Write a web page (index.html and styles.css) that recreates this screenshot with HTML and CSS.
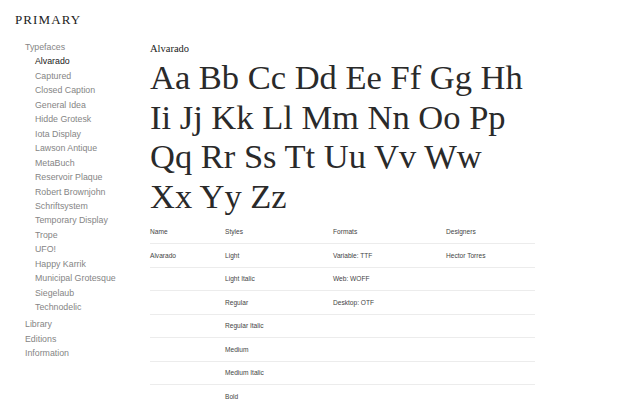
FILE: index.html
```html
<!DOCTYPE html>
<html>
<head>
<meta charset="utf-8">
<link rel="stylesheet" href="styles.css">
</head>
<body>
<div class="page">
  <aside class="side">
    <div class="logo">PRIMARY</div>
    <nav class="nav">
      <div class="nav-item">Typefaces</div>
      <div class="sub">
        <div class="sub-item active">Alvarado</div>
        <div class="sub-item">Captured</div>
        <div class="sub-item">Closed Caption</div>
        <div class="sub-item">General Idea</div>
        <div class="sub-item">Hidde Grotesk</div>
        <div class="sub-item">Iota Display</div>
        <div class="sub-item">Lawson Antique</div>
        <div class="sub-item">MetaBuch</div>
        <div class="sub-item">Reservoir Plaque</div>
        <div class="sub-item">Robert Brownjohn</div>
        <div class="sub-item">Schriftsystem</div>
        <div class="sub-item">Temporary Display</div>
        <div class="sub-item">Trope</div>
        <div class="sub-item">UFO!</div>
        <div class="sub-item">Happy Karrik</div>
        <div class="sub-item">Municipal Grotesque</div>
        <div class="sub-item">Siegelaub</div>
        <div class="sub-item">Technodelic</div>
      </div>
      <div class="nav-item">Library</div>
      <div class="nav-item">Editions</div>
      <div class="nav-item">Information</div>
    </nav>
  </aside>
  <main class="main">
    <h1 class="title">Alvarado</h1>
    <div class="specimen">
      <div>Aa Bb Cc Dd Ee Ff Gg Hh</div>
      <div>Ii Jj Kk Ll Mm Nn Oo Pp</div>
      <div>Qq Rr Ss Tt Uu Vv Ww</div>
      <div>Xx Yy Zz</div>
    </div>
    <div class="table">
      <div class="row head">
        <div class="c1">Name</div><div class="c2">Styles</div><div class="c3">Formats</div><div class="c4">Designers</div>
      </div>
      <div class="row">
        <div class="c1">Alvarado</div><div class="c2">Light</div><div class="c3">Variable: TTF</div><div class="c4">Hector Torres</div>
      </div>
      <div class="row">
        <div class="c1"></div><div class="c2">Light Italic</div><div class="c3">Web: WOFF</div><div class="c4"></div>
      </div>
      <div class="row">
        <div class="c1"></div><div class="c2">Regular</div><div class="c3">Desktop: OTF</div><div class="c4"></div>
      </div>
      <div class="row">
        <div class="c1"></div><div class="c2">Regular Italic</div><div class="c3"></div><div class="c4"></div>
      </div>
      <div class="row">
        <div class="c1"></div><div class="c2">Medium</div><div class="c3"></div><div class="c4"></div>
      </div>
      <div class="row">
        <div class="c1"></div><div class="c2">Medium Italic</div><div class="c3"></div><div class="c4"></div>
      </div>
      <div class="row last">
        <div class="c1"></div><div class="c2">Bold</div><div class="c3"></div><div class="c4"></div>
      </div>
    </div>
  </main>
</div>
</body>
</html>
```
FILE: styles.css
```css
html, body {
  margin: 0;
  padding: 0;
  background: #ffffff;
}
body {
  width: 640px;
  height: 400px;
  overflow: hidden;
}
.page {
  display: flex;
  align-items: flex-start;
}
.side {
  width: 135px;
  padding-left: 15px;
  padding-top: 12px;
  flex: none;
}
.logo {
  font-family: "Liberation Serif", serif;
  font-size: 13px;
  line-height: 16px;
  letter-spacing: 1.1px;
  color: #222;
}
.nav {
  margin-top: 12px;
  padding-left: 10px;
  font-family: "Liberation Sans", Arial, sans-serif;
  font-size: 8.8px;
  line-height: 14.45px;
  color: #858585;
}
.sub {
  padding-left: 10px;
  margin-bottom: 2.5px;
}
.sub-item.active {
  color: #1a1a1a;
}
.main {
  flex: 1;
  padding-top: 42px;
}
.title {
  margin: 0;
  font-family: "Liberation Serif", serif;
  font-weight: normal;
  font-size: 10.5px;
  line-height: 14px;
  color: #222;
}
.specimen {
  margin-top: 2px;
  font-family: "Liberation Serif", serif;
  font-size: 34.5px;
  line-height: 39.5px;
  color: #2a2a2a;
  white-space: nowrap;
}
.table {
  margin-top: 4.5px;
  width: 385px;
  font-family: "Liberation Sans", Arial, sans-serif;
  font-size: 6.6px;
  color: #444;
}
.row {
  display: flex;
  height: 23.5px;
  align-items: center;
  border-bottom: 1px solid #ececec;
  box-sizing: border-box;
}
.row.last {
  border-bottom: none;
}
.c1 { width: 75px; }
.c2 { width: 108px; }
.c3 { width: 113px; }
.c4 { flex: 1; }
```
